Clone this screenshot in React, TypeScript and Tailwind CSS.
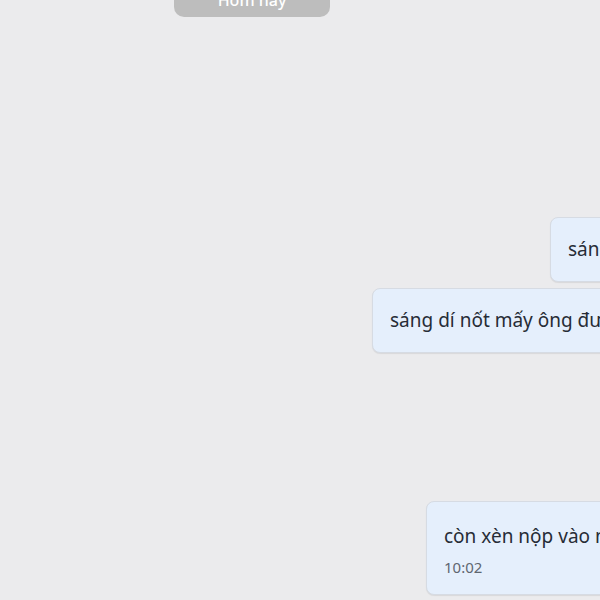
import React from "react";

const font = { fontFamily: '"Noto Sans", "Open Sans", sans-serif' };

const Bubble: React.FC<{ text: string; time?: string; offset: string }> = ({ text, time, offset }) => (
  <div
    className={`${offset} shrink-0 whitespace-nowrap rounded-lg border border-[#d6dbe3] bg-[#e5effc] pl-[17px] pr-6 shadow-[0_1px_1px_rgba(0,0,0,0.08)] ${time ? "pt-[20px] pb-[16px]" : "py-[17px]"}`}
  >
    <div className="text-[19px] leading-[29px] text-[#272c36]">{text}</div>
    {time && <div className="mt-[5px] text-[15px] leading-[22px] text-[#5f6670]">{time}</div>}
  </div>
);

export default function App() {
  return (
    <div className="h-[600px] w-[600px] overflow-hidden bg-[#ebebed]" style={font}>
      <div className="flex w-[1000px] flex-col items-start">
        {/* date separator */}
        <div className="ml-[174px] -mt-[17px] flex h-[34px] w-[156px] items-center justify-center rounded-[10px] bg-[#bdbdbd] text-[16px] font-medium text-white">
          Hôm nay
        </div>

        <div className="mt-[200px] flex flex-col items-start gap-[6px]">
          <Bubble offset="ml-[550px]" text="sáng mai nộp nhé" />
          <Bubble offset="ml-[372px]" text="sáng dí nốt mấy ông đưa" />
        </div>

        <div className="mt-[148px]">
          <Bubble offset="ml-[426px]" text="còn xèn nộp vào nhóm" time="10:02" />
        </div>
      </div>
    </div>
  );
}
